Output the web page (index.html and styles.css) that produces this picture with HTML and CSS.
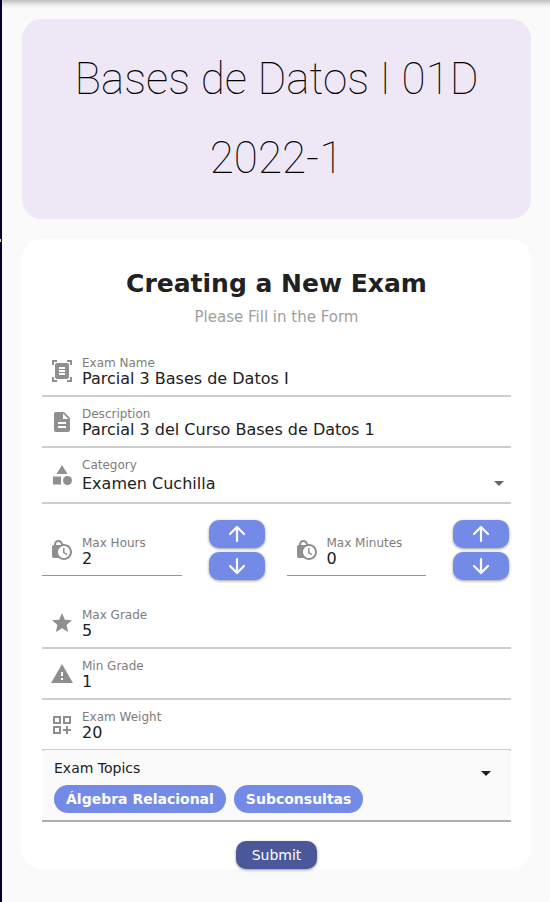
FILE: index.html
```
<!DOCTYPE html>
<html lang="es">
<head>
<meta charset="utf-8">
<meta name="viewport" content="width=device-width, initial-scale=1">
<title>Creating a New Exam</title>
<link rel="stylesheet" href="styles.css">
</head>
<body>
<div class="appbar-shadow"></div>
<div class="edge-mark"></div>
<main class="page">
  <header class="banner"><h1>Bases de Datos I 01D 2022-1</h1></header>
  <form class="card">
    <h2>Creating a New Exam</h2>
    <p class="subtitle">Please Fill in the Form</p>

    <div class="field">
      <svg class="icon" viewBox="0 0 24 24"><path d="M7 3H4v3H2V1h5v2zm15 3V1h-5v2h3v3h2zM7 21H4v-3H2v5h5v-2zm13-3v3h-3v2h5v-5h-2zM19 18c0 1.1-.9 2-2 2H7c-1.1 0-2-.9-2-2V6c0-1.1.9-2 2-2h10c1.1 0 2 .9 2 2v12zM15 8H9v2h6V8zm0 3H9v2h6v-2zm0 3H9v2h6v-2z"/></svg>
      <div class="control"><label for="name">Exam Name</label><input id="name" type="text" value="Parcial 3 Bases de Datos I"></div>
    </div>
    <div class="field">
      <svg class="icon" viewBox="0 0 24 24"><path d="M14 2H6c-1.1 0-1.99.9-1.99 2L4 20c0 1.1.89 2 1.99 2H18c1.1 0 2-.9 2-2V8l-6-6zm2 16H8v-2h8v2zm0-4H8v-2h8v2zm-3-5V3.5L18.5 9H13z"/></svg>
      <div class="control"><label for="description">Description</label><input id="description" type="text" value="Parcial 3 del Curso Bases de Datos 1"></div>
    </div>
    <div class="field field-select">
      <svg class="icon" viewBox="0 0 24 24"><path d="M12 2l-5.500 9h11zM3 13.500h8v8H3z"/><circle cx="17.500" cy="17.500" r="4.500"/></svg>
      <div class="control"><label for="category">Category</label><select id="category"><option>Examen Cuchilla</option></select></div>
      <span class="caret"></span>
    </div>

    <div class="times">
      <div class="time">
        <div class="field">
          <svg class="icon" viewBox="0 0 24 24"><path d="M14.5,14.2l2.9,1.7l-0.8,1.3L13,15v-5h1.5V14.2z M22,14c0,4.41-3.59,8-8,8c-2.02,0-3.86-0.76-5.27-2H4c-1.15,0-2-0.85-2-2V9c0-1.12,0.89-1.96,2-2v-0.5C4,4.01,6.01,2,8.5,2c2.34,0,4.24,1.79,4.46,4.08C13.3,6.03,13.65,6,14,6C18.41,6,22,9.59,22,14z M6,7h5v-0.74C10.88,4.99,9.8,4,8.5,4C7.12,4,6,5.12,6,6.5V7z M20,14c0-3.31-2.69-6-6-6s-6,2.69-6,6s2.69,6,6,6S20,17.31,20,14z"/></svg>
          <div class="control"><label for="hours">Max Hours</label><input id="hours" type="text" inputmode="numeric" value="2"></div>
        </div>
        <div class="steps">
          <button type="button" aria-label="More hours"><svg viewBox="0 0 24 24"><path d="M12 19V5.500M5 12l7-7 7 7"/></svg></button>
          <button type="button" aria-label="Fewer hours"><svg viewBox="0 0 24 24"><path d="M12 5v13.500M5 12l7 7 7-7"/></svg></button>
        </div>
      </div>
      <div class="time">
        <div class="field">
          <svg class="icon" viewBox="0 0 24 24"><path d="M14.5,14.2l2.9,1.7l-0.8,1.3L13,15v-5h1.5V14.2z M22,14c0,4.41-3.59,8-8,8c-2.02,0-3.86-0.76-5.27-2H4c-1.15,0-2-0.85-2-2V9c0-1.12,0.89-1.96,2-2v-0.5C4,4.01,6.01,2,8.5,2c2.34,0,4.24,1.79,4.46,4.08C13.3,6.03,13.65,6,14,6C18.41,6,22,9.59,22,14z M6,7h5v-0.74C10.88,4.99,9.8,4,8.5,4C7.12,4,6,5.12,6,6.5V7z M20,14c0-3.31-2.69-6-6-6s-6,2.69-6,6s2.69,6,6,6S20,17.31,20,14z"/></svg>
          <div class="control"><label for="minutes">Max Minutes</label><input id="minutes" type="text" inputmode="numeric" value="0"></div>
        </div>
        <div class="steps">
          <button type="button" aria-label="More minutes"><svg viewBox="0 0 24 24"><path d="M12 19V5.500M5 12l7-7 7 7"/></svg></button>
          <button type="button" aria-label="Fewer minutes"><svg viewBox="0 0 24 24"><path d="M12 5v13.500M5 12l7 7 7-7"/></svg></button>
        </div>
      </div>
    </div>

    <div class="field">
      <svg class="icon" viewBox="0 0 24 24"><path d="M12 17.270L18.180 21l-1.640-7.030L22 9.240l-7.190-.61L12 2 9.190 8.630 2 9.240l5.460 4.730L5.820 21z"/></svg>
      <div class="control"><label for="max">Max Grade</label><input id="max" type="text" inputmode="numeric" value="5"></div>
    </div>
    <div class="field">
      <svg class="icon" viewBox="0 0 24 24"><path d="M1 21h22L12 2 1 21zm12-3h-2v-2h2v2zm0-4h-2v-4h2v4z"/></svg>
      <div class="control"><label for="min">Min Grade</label><input id="min" type="text" inputmode="numeric" value="1"></div>
    </div>
    <div class="field">
      <svg class="icon" viewBox="0 0 24 24"><path d="M3 11h8V3H3v8zm2-6h4v4H5V5zM13 3v8h8V3h-8zm6 6h-4V5h4v4zM3 21h8v-8H3v8zm2-6h4v4H5v-4zM18 13h-2v3h-3v2h3v3h2v-3h3v-2h-3z"/></svg>
      <div class="control"><label for="weight">Exam Weight</label><input id="weight" type="text" inputmode="numeric" value="20"></div>
    </div>

    <div class="topics">
      <div class="topics-head">
        <span id="topics-label">Exam Topics</span>
        <button type="button" class="open" aria-labelledby="topics-label" aria-haspopup="listbox"><span class="caret"></span></button>
      </div>
      <div class="chips"><span class="chip">Álgebra Relacional</span><span class="chip">Subconsultas</span></div>
    </div>

    <button class="submit" type="submit">Submit</button>
  </form>
</main>
</body>
</html>
```
FILE: styles.css
```
* { box-sizing: border-box; }

body {
  margin: 0;
  min-height: 100vh;
  border-left: 2px solid #00002e;
  background: #fafafa;
  color: #212121;
  font-family: "DejaVu Sans", sans-serif;
}

/* lower edge of the bar that sits above the page */
.appbar-shadow {
  position: absolute;
  top: 0;
  left: 2px;
  right: 0;
  height: 8px;
  background: linear-gradient(#bdbdbd, #e6e6e6 50%, #fafafa);
}

.edge-mark {
  position: absolute;
  top: 239px;
  left: 0;
  width: 1px;
  height: 3px;
  background: #e6e0a0;
}

.page {
  display: flex;
  flex-direction: column;
  gap: 20px;
  padding: 19px 19px 33px 20px;
}

.banner {
  padding: 21px 20px;
  border-radius: 20px;
  background: #ede7f6;
}

h1 {
  margin: 0;
  color: #000;
  font: 100 44px/79px Roboto, sans-serif;
  text-align: center;
}

.card {
  display: flex;
  flex-direction: column;
  padding: 29px 20px 0;
  border-radius: 20px;
  background: #fff;
}

h2 {
  margin: 0;
  font-size: 25px;
  line-height: 32px;
  text-align: center;
}

.subtitle {
  margin: 6px 0 18px;
  color: #9e9e9e;
  font-size: 15px;
  line-height: 22px;
  text-align: center;
}

.field {
  display: flex;
  align-items: center;
  gap: 8px;
  padding: 0 7px 0 8px;
  border-bottom: 2px solid #cecece;
}

.icon {
  flex: none;
  width: 24px;
  height: 24px;
  fill: #8f8f8f;
}

.control {
  display: flex;
  flex: 1;
  flex-direction: column;
  min-width: 0;
  padding: 10px 0 7px;
}

label {
  color: #7d7d7d;
  font-size: 12px;
  line-height: 14px;
}

input,
select {
  width: 100%;
  height: 18px;
  margin: 0;
  padding: 0;
  border: 0;
  outline: 0;
  appearance: none;
  background: none;
  color: #212121;
  font: 16px/18px "DejaVu Sans", sans-serif;
}

.field-select .control { gap: 3px; padding-bottom: 9px; }
.field-select .caret { align-self: flex-end; margin-bottom: 16px; color: #666; }

.caret {
  border-top: 5px solid;
  border-right: 5px solid transparent;
  border-left: 5px solid transparent;
}

.times {
  display: grid;
  grid-template-columns: 1fr 1fr;
  gap: 20px;
  margin: 16px 0 18px;
}

.time {
  display: flex;
  align-items: center;
  gap: 27px;
  padding-right: 2px;
}

.time .field {
  flex: 1;
  min-width: 0;
  border-bottom: 1px solid #949494;
}

.time .control { padding-top: 12px; }

.steps {
  display: flex;
  flex-direction: column;
  gap: 4px;
}

.steps button {
  display: flex;
  align-items: center;
  justify-content: center;
  width: 56px;
  height: 28px;
  padding: 0;
  border: 0;
  border-radius: 10px;
  background: #738be7;
  box-shadow: 0 1px 3px rgba(0, 0, 0, .4);
}

.steps svg {
  width: 24px;
  height: 24px;
  fill: none;
  stroke: #fff;
  stroke-width: 2.2;
  stroke-linecap: round;
  stroke-linejoin: round;
}

.topics {
  margin-top: -1px;
  padding: 8px 12px 7px;
  border-bottom: 2px solid #adadad;
  border-radius: 4px 4px 0 0;
  background: #fafafa;
}

.topics-head {
  display: flex;
  align-items: center;
  justify-content: space-between;
  height: 20px;
  font-size: 14px;
  line-height: 20px;
}

.open {
  display: flex;
  align-self: flex-end;
  padding: 3px 8px 2px;
  border: 0;
  background: none;
  color: #212121;
}

.chips {
  display: flex;
  flex-wrap: wrap;
  gap: 8px;
  margin-top: 7px;
}

.chip {
  padding: 0 12px;
  border-radius: 14px;
  background: #738be7;
  color: #fff;
  font-size: 14px;
  font-weight: 700;
  line-height: 28px;
}

.submit {
  align-self: center;
  height: 28px;
  margin-top: 19px;
  padding: 0 16px;
  border: 0;
  border-radius: 10px;
  background: #4a5899;
  box-shadow: 0 1px 3px rgba(0, 0, 0, .4);
  color: #fff;
  font: 14px/28px "DejaVu Sans", sans-serif;
}
```
